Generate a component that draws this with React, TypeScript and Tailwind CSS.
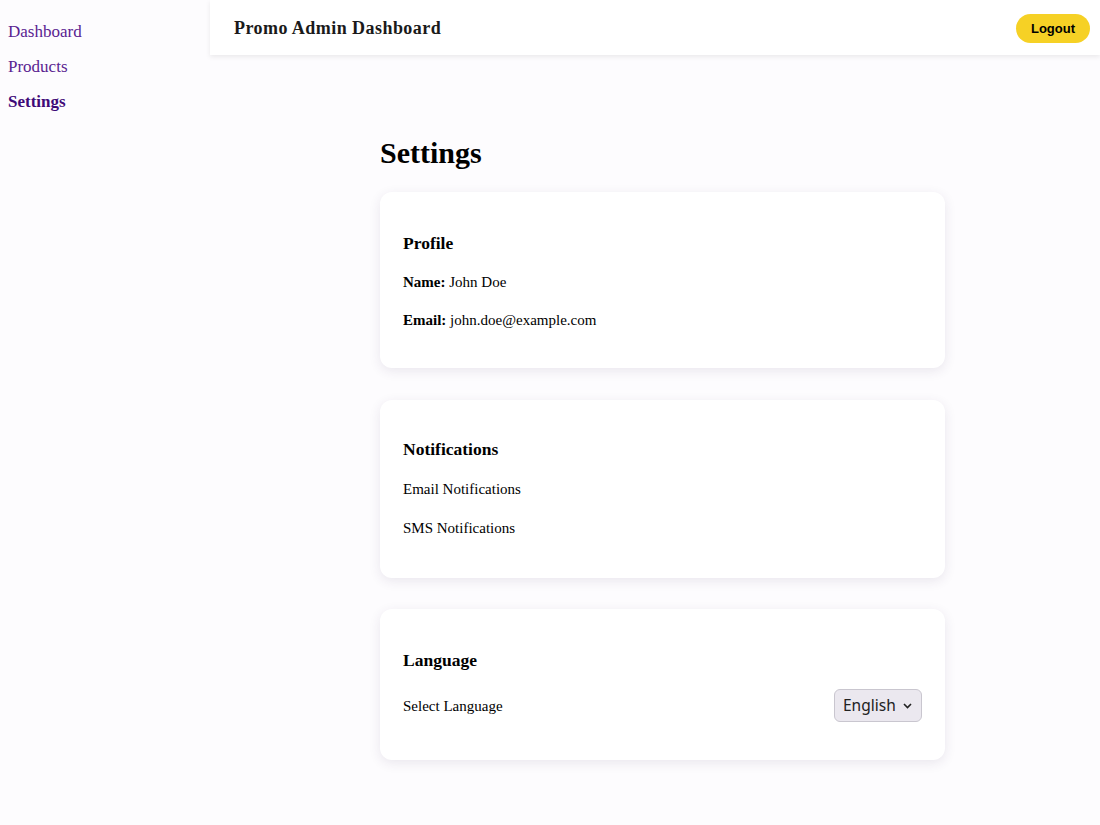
import React from "react";

const serif = { fontFamily: '"Liberation Serif", "Times New Roman", serif' };

function Card({ children, className = "" }: { children: React.ReactNode; className?: string }) {
  return (
    <div
      className={`bg-white rounded-xl px-[23px] shadow-[0_3px_12px_rgba(60,40,90,0.10)] ${className}`}
    >
      {children}
    </div>
  );
}

export default function App() {
  return (
    <div className="min-h-[825px] bg-[#fdfcfe] text-black flex" style={serif}>
      <aside className="w-[210px] shrink-0 pt-[21px] pl-2 flex flex-col">
        <a className="text-[17px] leading-[22px] text-[#5a2391] h-[35px]">Dashboard</a>
        <a className="text-[17px] leading-[22px] text-[#5a2391] h-[35px]">Products</a>
        <a className="text-[17px] leading-[22px] text-[#3f0a78] font-bold h-[35px]">Settings</a>
      </aside>
      <div className="flex-1 flex flex-col">
        <header className="h-[55px] bg-white shadow-[0_2px_5px_rgba(0,0,0,0.08)] flex items-center justify-between pl-6 pr-[10px] pt-[2px]">
          <h1 className="text-[18px] font-bold text-[#1a1a1a] tracking-[0.45px]">Promo Admin Dashboard</h1>
          <button
            className="h-[29px] px-[15px] rounded-full bg-[#f6d125] text-[13px] font-bold text-black"
            style={{ fontFamily: '"Liberation Sans", Arial, sans-serif' }}
          >
            Logout
          </button>
        </header>
        <main className="pl-[170px] pt-[80px]">
          <div className="w-[565px]">
            <h2 className="text-[30px] font-bold leading-[36px] mb-[21px]">Settings</h2>
            <Card className="pt-[40px] h-[176px]">
              <h3 className="text-[17.5px] font-bold leading-[22px]">Profile</h3>
              <p className="text-[15px] leading-[18px] mt-[19px]">
                <b>Name:</b> John Doe
              </p>
              <p className="text-[15px] leading-[18px] mt-[20px]">
                <b>Email:</b> john.doe@example.com
              </p>
            </Card>
            <Card className="pt-[38px] h-[178px] mt-[32px]">
              <h3 className="text-[17.5px] font-bold leading-[22px]">Notifications</h3>
              <p className="text-[15px] leading-[18px] mt-[20px]">Email Notifications</p>
              <p className="text-[15px] leading-[18px] mt-[21px]">SMS Notifications</p>
            </Card>
            <Card className="pt-[40px] h-[151px] mt-[31px]">
              <h3 className="text-[17.5px] font-bold leading-[22px]">Language</h3>
              <div className="flex items-center justify-between mt-[18px]">
                <span className="text-[15px] leading-[18px]">Select Language</span>
                <div
                  className="h-[33px] w-[88px] rounded-md border border-[#c9c6cf] bg-[#ebe8ef] flex items-center justify-between pl-2 pr-[9px] text-[15.5px] text-[#222]"
                  style={{ fontFamily: '"Noto Sans", "Open Sans", sans-serif' }}
                >
                  <span>English</span>
                  <svg width="9" height="6" viewBox="0 0 9 6">
                    <path d="M1 1l3.5 3.5L8 1" fill="none" stroke="#222" strokeWidth="1.6" />
                  </svg>
                </div>
              </div>
            </Card>
          </div>
        </main>
      </div>
    </div>
  );
}
